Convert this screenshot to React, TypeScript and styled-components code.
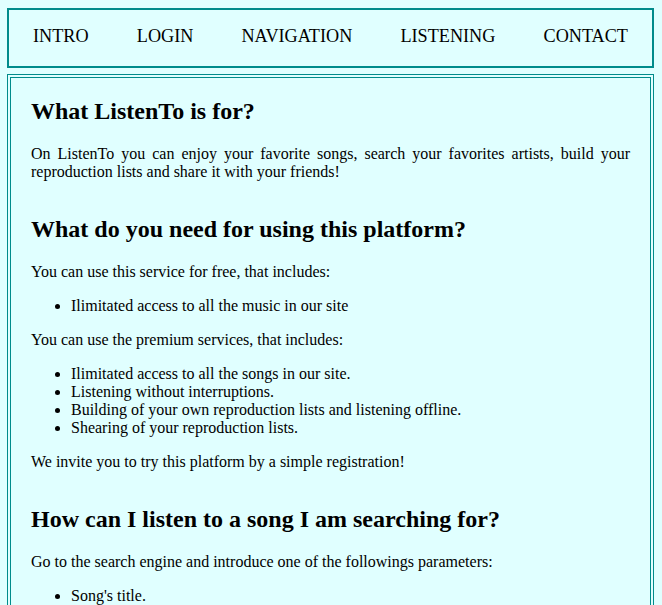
import React from 'react';
import styled, {createGlobalStyle} from 'styled-components';

const navItems = ['INTRO', 'LOGIN', 'NAVIGATION', 'LISTENING', 'CONTACT'];

const GlobalStyle = createGlobalStyle`
  html, body {
    background: #e0ffff;
  }
  body {
    margin: 8px 8px 0 7px;
    font-family: "Liberation Serif", "Times New Roman", serif;
    font-size: 16px;
    color: #000;
  }
`;

const App = () => {
  return (
    <>
      <GlobalStyle />
      <Header>
        <NavList>
          {navItems.map(item => (
            <NavItem key={item}>{item}</NavItem>
          ))}
        </NavList>
      </Header>
      <Main>
        <Section>
          <Title>What ListenTo is for?</Title>
          <Text justify>
            On ListenTo you can enjoy your favorite songs, search your favorites artists, build your
            reproduction lists and share it with your friends!
          </Text>
        </Section>
        <Section>
          <Title>What do you need for using this platform?</Title>
          <Text>You can use this service for free, that includes:</Text>
          <List>
            <li>Ilimitated access to all the music in our site</li>
          </List>
          <Text>You can use the premium services, that includes:</Text>
          <List>
            <li>Ilimitated access to all the songs in our site.</li>
            <li>Listening without interruptions.</li>
            <li>Building of your own reproduction lists and listening offline.</li>
            <li>Shearing of your reproduction lists.</li>
          </List>
          <Text>We invite you to try this platform by a simple registration!</Text>
        </Section>
        <Section>
          <Title>How can I listen to a song I am searching for?</Title>
          <Text>Go to the search engine and introduce one of the followings parameters:</Text>
          <List>
            <li>Song's title.</li>
            <li>Artist's name.</li>
            <li>Album's name.</li>
          </List>
        </Section>
      </Main>
    </>
  );
};

const Header = styled.header`
  border: 2px solid #008b8b;
  height: 56px;
`;

const NavList = styled.ul`
  list-style: none;
  margin: 0;
  padding: 16px 0 0;
  display: flex;
  justify-content: space-around;
`;

const NavItem = styled.li`
  font-size: 18.2px;
  line-height: normal;
`;

const Main = styled.main`
  margin-top: 6px;
  border: 4px double #008b8b;
  padding: 1px 20px 20px;
`;

const Section = styled.section`
  display: flow-root;
`;

const Title = styled.h2`
  font-size: 24px;
  font-weight: bold;
  margin: 19px 0 20px;
`;

const Text = styled.p<{justify?: boolean}>`
  margin: 16px 0;
  text-align: ${p => (p.justify ? 'justify' : 'left')};
`;

const List = styled.ul`
  margin: 16px 0;
  padding-left: 40px;
`;

export default App;
